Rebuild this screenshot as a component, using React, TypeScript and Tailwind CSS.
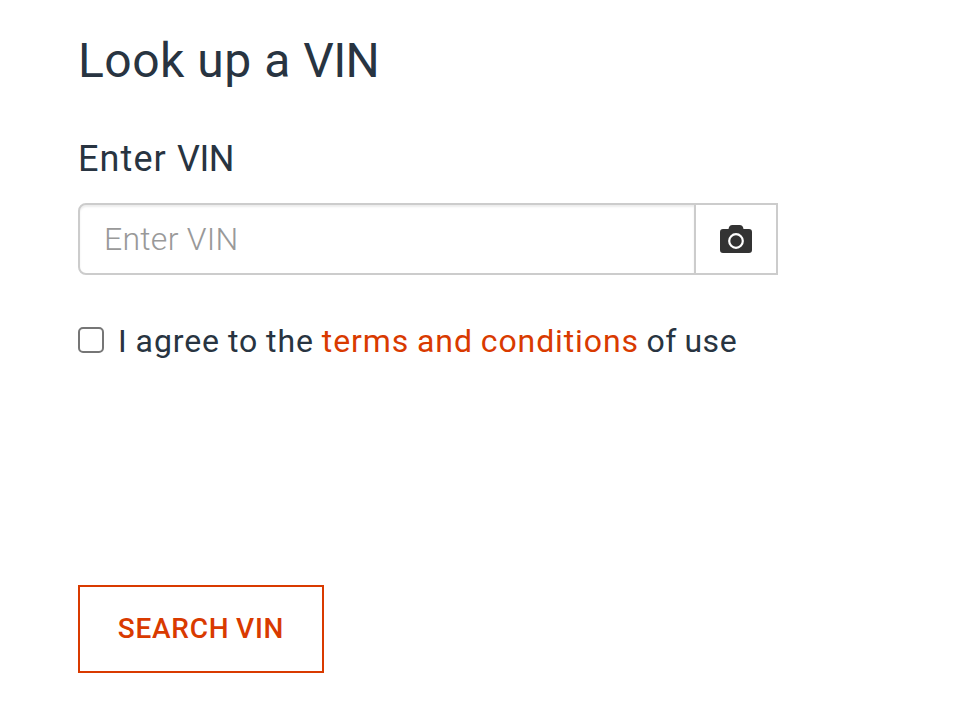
export default function App() {
  return (
    <main className="h-[716px] w-[954px] overflow-hidden bg-white pl-[78px] pt-[30px] font-['Roboto',sans-serif] text-[#283441]">
      <h1 className="h-[62px] whitespace-nowrap text-[48px] leading-[62px] tracking-[0.5px]">Look up a <span className="tracking-[-0.6px]">VIN</span></h1>
      <label className="mt-[43px] block h-[48px] whitespace-nowrap text-[36px] leading-[48px] tracking-[1.1px]">Enter <span className="tracking-[-0.5px]">VIN</span></label>
      <div className="mt-[20px] flex h-[72px] w-[700px]">
        <input placeholder="Enter VIN" className="h-[72px] w-[618px] rounded-l-[8px] border-2 border-[#ccc] px-[24px] text-[32px] font-light tracking-[0.25px] shadow-[inset_0_2px_2px_rgba(0,0,0,0.075)] placeholder:text-[#999]" />
        <button className="flex h-[72px] w-[82px] items-center justify-center border-2 border-l-0 border-[#ccc]">
          <svg width="32" height="28" viewBox="0 0 32 28">
            <path fill="#333" d="M3 4H8.5C9 1.5 10 0 12.5 0H19.5C22 0 23 1.5 23.5 4H29Q32 4 32 7V25Q32 28 29 28H3Q0 28 0 25V7Q0 4 3 4Z" />
            <circle cx="16" cy="16" r="6.8" fill="none" stroke="#fff" strokeWidth="2.2" />
          </svg>
        </button>
      </div>
      <div className="mt-[42px] flex h-[48px] items-center">
        <input type="checkbox" className="mb-[2px] size-[26px] appearance-none rounded-[5px] border-2 border-[#767676]" />
        <p className="ml-[14px] whitespace-nowrap text-[32px] leading-[48px] tracking-[0.88px] [word-spacing:-0.8px]">I agree to the <a className="text-[#d93a00]">terms and conditions</a><span className="tracking-[0.5px]"> of use</span></p>
      </div>
      <button className="mt-[220px] h-[88px] w-[246px] border-2 border-[#d93a00] text-[28px] font-medium tracking-[0.75px] text-[#d93a00] [word-spacing:-1px]">SEARCH VIN</button>
    </main>
  );
}
